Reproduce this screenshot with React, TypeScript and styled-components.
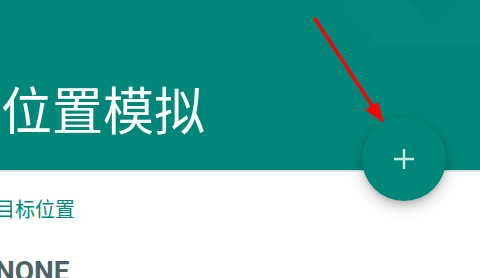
import React from "react";
import styled, { createGlobalStyle } from "styled-components";

const Global = createGlobalStyle`
  html, body { margin: 0; padding: 0; background: #ffffff; }
  body { width: 480px; height: 278px; overflow: hidden; font-family: Roboto, "Noto Sans CJK SC", sans-serif; }
`;

const Page = styled.div`
  position: relative;
  width: 480px;
  height: 278px;
  overflow: hidden;
  background: #ffffff;
`;

const Header = styled.header`
  position: relative;
  height: 170px;
  background: #00877a;
  box-shadow: 0 1px 2px rgba(0, 0, 0, 0.25);
  display: flex;
  align-items: flex-start;
  padding: 78px 0 0 1px;
  box-sizing: border-box;
  overflow: hidden;
`;

const Pattern = styled.svg`
  position: absolute;
  inset: 0;
  pointer-events: none;
`;

const Title = styled.h1`
  position: relative;
  margin: 0;
  font-family: "Noto Sans CJK SC", sans-serif;
  font-weight: 400;
  font-size: 51px;
  line-height: 60px;
  color: #ffffff;
  letter-spacing: 0;
`;

const Content = styled.section`
  display: flex;
  flex-direction: column;
  padding: 26px 0 0 0;
  margin-left: -5px;
`;

const Label = styled.div`
  font-family: "Noto Sans CJK SC", sans-serif;
  font-size: 20px;
  line-height: 26px;
  color: #00897b;
`;

const Value = styled.div`
  margin-top: 33px;
  font-family: Roboto, sans-serif;
  font-weight: 700;
  font-size: 28px;
  line-height: 34px;
  color: #4c6361;
`;

const Fab = styled.button`
  position: absolute;
  left: 362px;
  top: 117px;
  width: 84px;
  height: 84px;
  border-radius: 50%;
  border: none;
  padding: 0;
  background: #00877a;
  box-shadow: 0 6px 14px rgba(0, 0, 0, 0.22), 0 2px 5px rgba(0, 0, 0, 0.15);
  display: flex;
  align-items: center;
  justify-content: center;
  cursor: pointer;
`;

const Arrow = styled.svg`
  position: absolute;
  left: 0;
  top: 0;
  pointer-events: none;
`;

export default function App() {
  return (
    <Page>
      <Global />
      <Header>
        <Pattern width="480" height="170" viewBox="0 0 480 170">
          <polygon points="343,0 480,0 480,44 378,44" fill="#ffffff" opacity="0.012" />
          <polygon points="407,0 460,0 432,27" fill="#000000" opacity="0.025" />
        </Pattern>
        <Title>位置模拟</Title>
      </Header>
      <Content>
        <Label>目标位置</Label>
        <Value>NONE</Value>
      </Content>
      <Fab aria-label="添加">
        <svg width="24" height="24" viewBox="0 0 24 24">
          <path d="M12 2v20M2 12h20" stroke="#c4e6e0" strokeWidth="2.4" fill="none" />
        </svg>
      </Fab>
      <Arrow width="480" height="278" viewBox="0 0 480 278">
        <line x1="315" y1="19" x2="377" y2="113" stroke="#ff0000" strokeWidth="3.2" strokeLinecap="round" />
        <polygon points="384,123 365,110 378,102" fill="#ff0000" />
      </Arrow>
    </Page>
  );
}
